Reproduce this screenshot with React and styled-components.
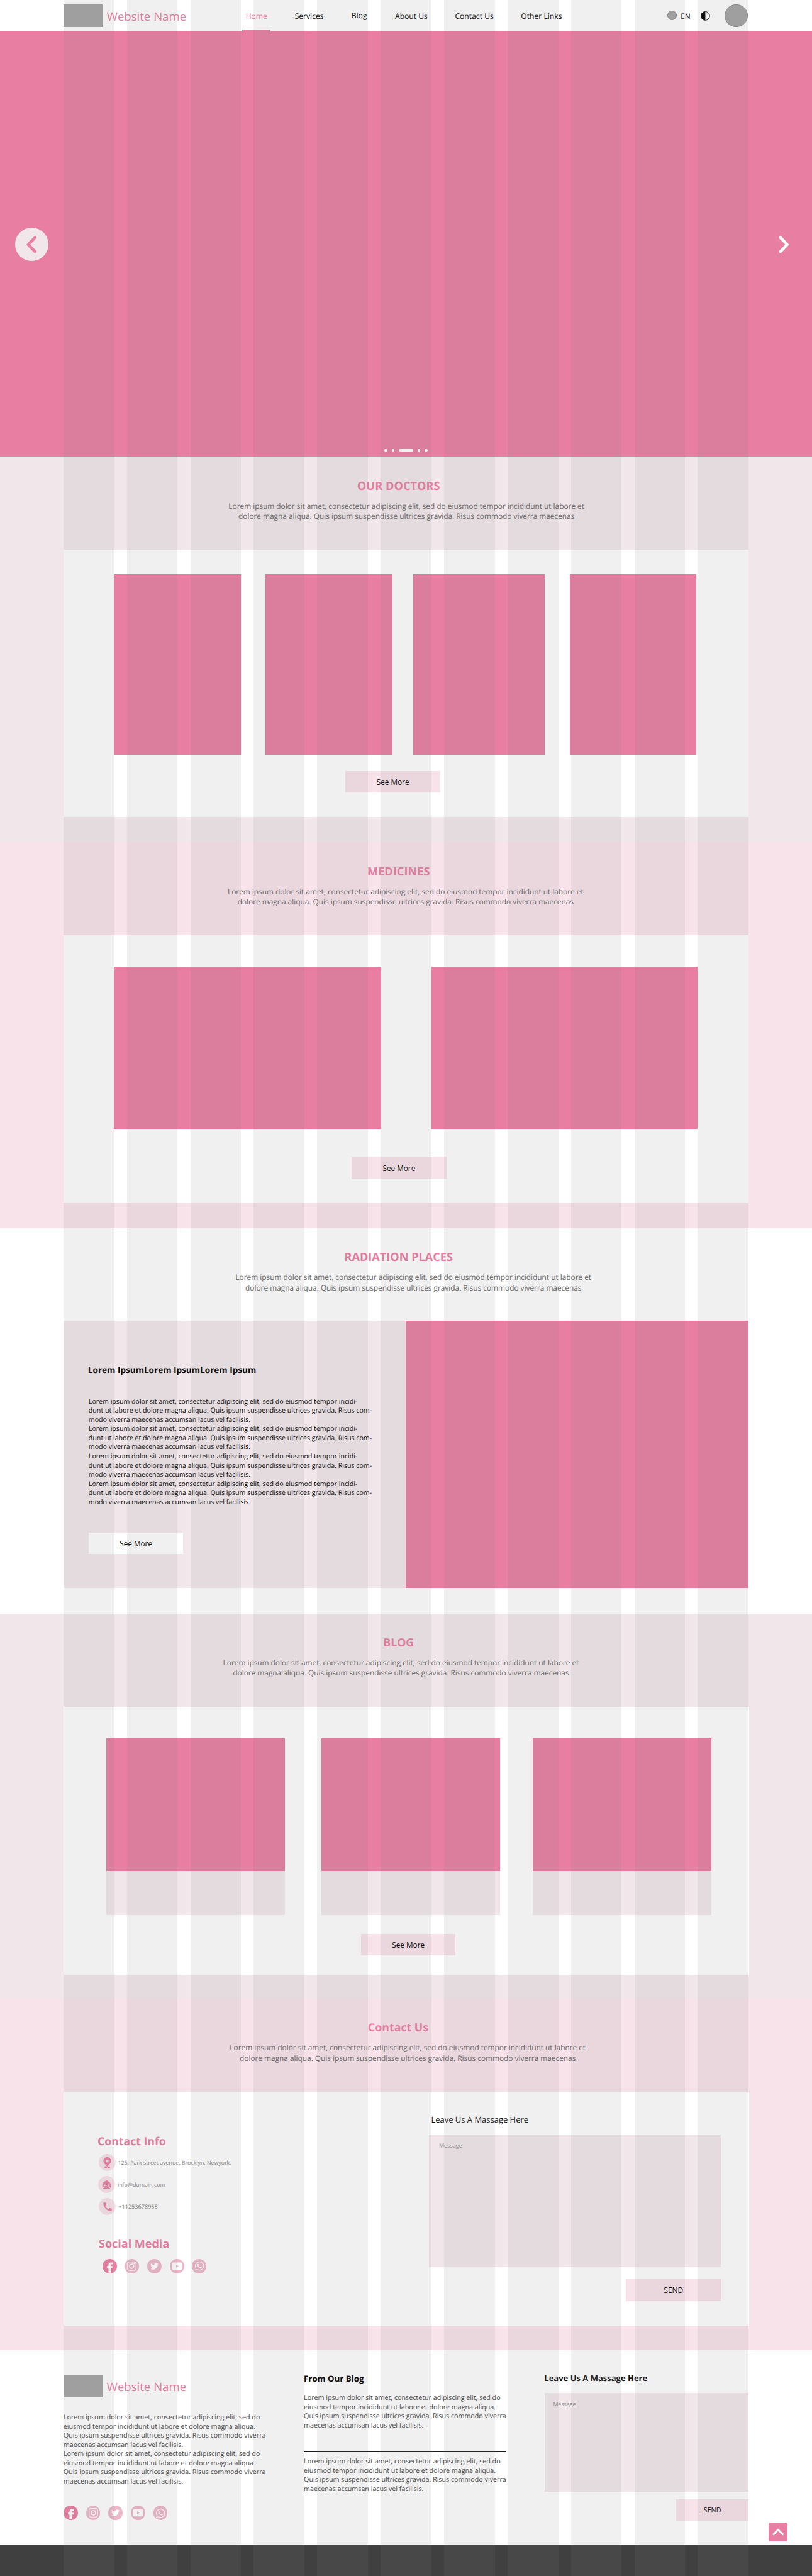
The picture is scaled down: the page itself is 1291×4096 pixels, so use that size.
import React from 'react';
import styled, { createGlobalStyle, css } from 'styled-components';
import { FaTwitter, FaWhatsapp } from 'react-icons/fa';
import { MdCall } from 'react-icons/md';

/* The design is specified on a 1920 x 6090 board; x() and y() bring its units to the page. */
const x = (n) => `${+((n * 1291) / 1920).toFixed(3)}px`;
const y = (n) => `${+((n * 4096) / 6090).toFixed(3)}px`;

const pink = '#e87ea1';
const pinkSoft = '#edb7ca';
const pinkPale = '#f9e3eb';
const mauve = '#f1e7ea';
const grey = '#a3a3a3';

const GlobalStyle = createGlobalStyle`
  *, *::before, *::after { box-sizing: border-box; }
  html, body { margin: 0; padding: 0; background: #fff; }
  body {
    font-family: "Open Sans", "Noto Sans", sans-serif;
    color: #000;
    text-rendering: geometricPrecision;
  }
  h1, h2, h3, p, ul { margin: 0; padding: 0; font-weight: 400; list-style: none; }
  button, textarea { font: inherit; border: 0; border-radius: 0; padding: 0; }
  svg { display: block; }
`;

const Page = styled.div`
  position: relative;
  display: flex;
  flex-direction: column;
  width: 1291px;
  height: 4096px;
  overflow: hidden;
`;

/* Translucent 11-column guide laid over the whole page */
const ColumnGuide = styled.div`
  position: absolute;
  inset: 0;
  z-index: 5;
  display: grid;
  grid-template-columns: repeat(11, ${x(120)});
  column-gap: ${x(30)};
  padding-left: ${x(150)};
  pointer-events: none;
`;

const GuideColumn = styled.i`
  background: rgba(128, 128, 128, 0.12);
`;

/* ---------- header ---------- */

const Header = styled.header`
  display: flex;
  align-items: flex-start;
  flex: none;
  height: ${y(75)};
  padding-left: ${x(150)};
  background: #fff;
`;

const BrandRow = styled.div`
  display: flex;
  align-items: flex-start;
  gap: ${x(9.5)};
  width: ${x(422)};
  height: ${y(54)};
  margin-top: ${(p) => y(p.$top)};
`;

const LogoBox = styled.div`
  width: ${x(93)};
  height: ${y(54)};
  background: ${grey};
`;

const BrandName = styled.span`
  margin-top: ${y(11.6)};
  font-size: ${x(27.65)};
  line-height: ${y(36)};
  color: ${pink};
  white-space: nowrap;
`;

const Nav = styled.nav`
  display: flex;
`;

const NavItem = styled.a`
  width: ${(p) => x(p.$step)};
  padding-top: ${(p) => y(26.3 + (p.$drop || 0))};
  font-size: ${x(18.05)};
  line-height: ${y(24)};
  white-space: nowrap;
  ${(p) =>
    p.$active &&
    css`
      height: ${y(75)};
      margin-right: ${x(57)};
      padding-left: ${x(9)};
      color: ${pink};
      border-bottom: ${y(5)} solid ${pink};
    `}
`;

const Disc = styled.span`
  flex: none;
  width: ${(p) => x(p.$size)};
  height: ${(p) => x(p.$size)};
  margin: ${(p) => y(p.$top)} 0 0 ${(p) => x(p.$left || 0)};
  border: 1px solid #858585;
  border-radius: 50%;
  background: ${grey};
`;

const Language = styled.span`
  width: ${x(48)};
  margin: ${y(26.6)} 0 0 ${x(9.5)};
  font-size: ${x(17.6)};
  line-height: ${y(24)};
`;

const ContrastIcon = styled.svg`
  width: ${x(22)};
  height: ${x(22)};
  margin-top: ${y(27)};
`;

/* ---------- hero ---------- */

const Hero = styled.section`
  display: flex;
  flex: none;
  flex-direction: column;
  justify-content: space-between;
  height: ${y(1005)};
  padding: ${y(462.5)} ${x(35)} ${y(12)};
  background: ${pink};
`;

const Arrows = styled.div`
  display: flex;
  justify-content: space-between;
`;

const ArrowButton = styled.button`
  width: ${x(80)};
  height: ${x(80)};
  border-radius: 50%;
  color: ${(p) => (p.$filled ? pink : '#fff')};
  background: ${(p) => (p.$filled ? mauve : 'transparent')};
  svg { width: 100%; height: 100%; }
`;

const Dots = styled.div`
  display: flex;
  justify-content: center;
  gap: ${x(10.2)};
`;

const Dot = styled.span`
  width: ${(p) => x(p.$active ? 34 : 7)};
  height: ${x(7)};
  border-radius: ${x(4)};
  background: #fff;
`;

/* ---------- sections ---------- */

const Section = styled.section`
  flex: none;
  height: ${(p) => y(p.$height)};
  background: ${(p) => p.$tone};
`;

const Intro = styled.div`
  height: ${(p) => y(p.$height)};
  padding-top: ${y(51)};
  text-align: center;
`;

const shift = css`
  padding-left: ${(p) => x(Math.max(0, 2 * p.$shift))};
  padding-right: ${(p) => x(Math.max(0, -2 * p.$shift))};
`;

const Title = styled.h2`
  ${shift}
  font-size: ${(p) => x(p.$size)};
  font-weight: 700;
  line-height: ${y(36)};
  color: ${pink};
`;

const Lead = styled.p`
  ${shift}
  margin-top: ${y(17.5)};
  font-size: ${x(17.63)};
  line-height: ${y(24.3)};
  color: #666;
`;

const Panel = styled.div`
  display: flex;
  flex-direction: ${(p) => (p.$row ? 'row' : 'column')};
  width: ${x(1620)};
  height: ${(p) => y(p.$height)};
  margin-left: ${(p) => x(p.$left || 150)};
  padding-top: ${(p) => y(p.$top || 0)};
  background: #fff;
`;

const CardRow = styled.div`
  display: flex;
`;

const Card = styled.article`
  width: ${(p) => x(p.$w)};
  height: ${(p) => y(p.$h)};
  margin-left: ${(p) => x(p.$gap)};
  background: ${pink};
  border-bottom: ${(p) => y(p.$caption || 0)} solid ${mauve};
`;

const Button = styled.button`
  flex: none;
  display: flex;
  align-items: center;
  justify-content: center;
  width: ${(p) => x(p.$w || 224)};
  height: ${y(51)};
  margin: ${(p) => y(p.$top)} 0 0 ${(p) => x(p.$left || 0)};
  font-size: ${(p) => x(p.$size || 17.5)};
  color: #000;
  background: ${(p) => (p.$plain ? '#fff' : pinkPale)};
`;

/* ---------- radiation places ---------- */

const Story = styled.div`
  width: ${x(809)};
  padding: ${y(101.5)} 0 0 ${x(59.5)};
  background: ${mauve};
`;

const StoryTitle = styled.h3`
  margin-left: ${x(-1.5)};
  font-size: ${x(20.19)};
  font-weight: 700;
  line-height: ${y(30)};
`;

const StoryText = styled.p`
  margin-top: ${y(50)};
  font-size: ${x(15.82)};
  line-height: ${y(21.6)};
  white-space: pre-line;
`;

const StoryImage = styled.div`
  width: ${x(811)};
  margin-top: ${y(1)};
  background: ${pink};
`;

/* ---------- contact ---------- */

const ContactDetails = styled.div`
  width: ${x(863)};
  padding: ${y(99.4)} 0 0 ${x(81)};
`;

const DetailTitle = styled.h3`
  margin: ${(p) => y(p.$top || 0)} 0 0 ${(p) => x(p.$left || 0)};
  font-size: ${(p) => x(p.$size)};
  font-weight: 700;
  line-height: ${y(36)};
  color: ${pink};
`;

const DetailList = styled.ul`
  display: flex;
  flex-direction: column;
  gap: ${y(12)};
  margin-top: ${y(12.6)};
`;

const Detail = styled.li`
  display: flex;
  align-items: center;
  gap: ${x(6)};
  height: ${y(40)};
  margin-left: ${(p) => x(p.$left)};
  font-size: ${(p) => x(p.$size)};
  color: #858585;
`;

const DetailIcon = styled.span`
  display: flex;
  align-items: center;
  justify-content: center;
  width: ${x(40)};
  height: ${x(40)};
  border-radius: 50%;
  color: ${pink};
  background: ${pinkPale};
`;

const Glyph = styled.svg`
  width: ${x(40)};
  height: ${x(40)};
  fill: currentColor;
`;

const Socials = styled.div`
  display: flex;
  gap: ${x(19.1)};
  margin: ${(p) => y(p.$top)} 0 0 ${(p) => x(p.$left || 0)};
`;

const Social = styled.a`
  display: flex;
  align-items: center;
  justify-content: center;
  width: ${x(34)};
  height: ${x(34)};
  border-radius: 50%;
  color: #fff;
  background: ${(p) => (p.$active ? pink : pinkSoft)};
  --disc: ${(p) => (p.$active ? pink : pinkSoft)};
`;

const SocialGlyph = styled.svg`
  width: ${x(34)};
  height: ${x(34)};
  fill: currentColor;
`;

const MessageForm = styled.form`
  display: flex;
  flex-direction: column;
  align-items: flex-end;
  width: ${(p) => x(p.$w)};
  padding-top: ${(p) => y(p.$top)};
`;

const FormTitle = styled.h3`
  align-self: flex-start;
  margin-left: ${(p) => x(p.$left)};
  font-size: ${(p) => x(p.$size)};
  font-weight: ${(p) => (p.$bold ? 700 : 400)};
  line-height: ${y(28)};
  color: #111;
`;

const MessageBox = styled.textarea`
  display: block;
  width: 100%;
  height: ${(p) => y(p.$h)};
  margin-top: ${y(20.9)};
  padding: ${y(18.6)} ${(p) => x(p.$pad)};
  font-size: ${(p) => x(p.$size)};
  line-height: ${y(18)};
  background: ${mauve};
  resize: none;
  &::placeholder { color: #8f8f8f; opacity: 1; }
`;

/* ---------- footer ---------- */

const Footer = styled.footer`
  position: relative;
  flex: none;
  display: flex;
  height: ${y(460)};
  padding-left: ${x(150)};
  background: #fff;
`;

const AboutColumn = styled.div`
  width: ${x(568.5)};
`;

const BlogColumn = styled.div`
  width: ${x(569.5)};
  padding-top: ${y(53.8)};
`;

const BlogTitle = styled.h3`
  font-size: ${x(19.74)};
  font-weight: 700;
  line-height: ${y(28)};
`;

const FooterText = styled.p`
  margin-top: ${(p) => y(p.$top)};
  font-size: ${x(15.96)};
  line-height: ${y(21.6)};
  color: #444;
  white-space: pre-line;
`;

const Divider = styled.hr`
  width: ${x(478)};
  height: 1px;
  margin: ${y(50.7)} 0 0;
  border: 0;
  background: #1a1a1a;
`;

const BackToTop = styled.button`
  position: absolute;
  right: ${x(58)};
  bottom: ${y(7)};
  width: ${x(45)};
  height: ${x(45)};
  border-radius: ${x(5)};
  background: ${pink};
  svg { width: 100%; height: 100%; }
`;

const BottomBar = styled.div`
  flex: 1;
  background: #404040;
`;

/* ---------- content ---------- */

const lead = [
  'Lorem ipsum dolor sit amet, consectetur adipiscing elit, sed do eiusmod tempor incididunt ut labore et',
  'dolore magna aliqua. Quis ipsum suspendisse ultrices gravida. Risus commodo viverra maecenas',
];

const storyParagraph =
  'Lorem ipsum dolor sit amet, consectetur adipiscing elit, sed do eiusmod tempor incidi-\n' +
  'dunt ut labore et dolore magna aliqua. Quis ipsum suspendisse ultrices gravida. Risus com-\n' +
  'modo viverra maecenas accumsan lacus vel facilisis.';

const footerParagraph =
  'Lorem ipsum dolor sit amet, consectetur adipiscing elit, sed do\n' +
  'eiusmod tempor incididunt ut labore et dolore magna aliqua.\n' +
  'Quis ipsum suspendisse ultrices gravida. Risus commodo viverra\n' +
  'maecenas accumsan lacus vel facilisis.';

function Brand({ top }) {
  return (
    <BrandRow $top={top}>
      <LogoBox />
      <BrandName>Website Name</BrandName>
    </BrandRow>
  );
}

function SectionIntro({ title, size, height, titleShift = -17.5, leadShift }) {
  return (
    <Intro $height={height}>
      <Title $size={size} $shift={titleShift}>{title}</Title>
      <Lead $shift={leadShift}>
        {lead[0]}
        <br />
        {lead[1]}
      </Lead>
    </Intro>
  );
}

function Chevron({ points, box = 80, width = 7, color = 'currentColor' }) {
  return (
    <svg viewBox={`0 0 ${box} ${box}`} fill="none" stroke={color} strokeWidth={width} strokeLinecap="round" strokeLinejoin="round">
      <polyline points={points} />
    </svg>
  );
}

function SocialLinks({ top, left }) {
  return (
    <Socials $top={top} $left={left}>
      <Social $active>
        <SocialGlyph viewBox="0 0 34 34">
          <path d="M14 32.3V21.3H10.5V16.7H14V14.5C14 10 16.5 8 20 8H24V12.5H21.5C19.9 12.5 19.3 13.3 19.3 14.8V16.7H23.8L23.2 21.3H19.3V32.3Z" />
        </SocialGlyph>
      </Social>
      <Social>
        <SocialGlyph viewBox="0 0 34 34">
          <g fill="none" stroke="currentColor">
            <rect x="6.9" y="6.9" width="20.2" height="20.2" rx="5" strokeWidth="1.7" />
            <circle cx="17" cy="17" r="5.1" strokeWidth="2.2" />
          </g>
          <circle cx="22.9" cy="11" r="1.3" />
        </SocialGlyph>
      </Social>
      <Social>
        <FaTwitter size={x(19.4)} />
      </Social>
      <Social>
        <SocialGlyph viewBox="0 0 34 34">
          <rect x="5" y="8.3" width="24.3" height="17.4" rx="4" />
          <path d="M14.8 13.4L21 17L14.8 20.6Z" fill="var(--disc)" />
        </SocialGlyph>
      </Social>
      <Social>
        <FaWhatsapp size={x(24.4)} />
      </Social>
    </Socials>
  );
}

export default function App() {
  return (
    <>
      <GlobalStyle />
      <Page>
        <ColumnGuide>
          {Array.from({ length: 11 }, (_, i) => <GuideColumn key={i} />)}
        </ColumnGuide>

        <Header>
          <Brand top={10} />
          <Nav>
            <NavItem $step={68} $active>Home</NavItem>
            <NavItem $step={134}>Services</NavItem>
            <NavItem $step={103} $drop={-1}>Blog</NavItem>
            <NavItem $step={142} $drop={1}>About Us</NavItem>
            <NavItem $step={156}>Contact Us</NavItem>
            <NavItem $step={346} $drop={1}>Other Links</NavItem>
          </Nav>
          <Disc $size={22} $top={26} />
          <Language>EN</Language>
          <ContrastIcon viewBox="0 0 22 22">
            <circle cx="11" cy="11" r="10.3" fill="#fff" stroke="#000" strokeWidth="1.3" />
            <path d="M11 0.7A10.3 10.3 0 0 0 11 21.3Z" />
          </ContrastIcon>
          <Disc $size={54} $top={10} $left={34.5} />
        </Header>

        <Hero>
          <Arrows>
            <ArrowButton $filled><Chevron points="47,23.5 31,40 47,56.5" /></ArrowButton>
            <ArrowButton><Chevron points="40,23.5 56,40 40,56.5" /></ArrowButton>
          </Arrows>
          <Dots>
            <Dot /><Dot /><Dot $active /><Dot /><Dot />
          </Dots>
        </Hero>

        <Section $height={911.5} $tone={mauve}>
          <SectionIntro title="OUR DOCTORS" size={27.11} height={219} leadShift={1} />
          <Panel $height={633} $top={58}>
            <CardRow>
              <Card $w={300} $h={427} $gap={119} />
              <Card $w={300} $h={427} $gap={59} />
              <Card $w={311} $h={427} $gap={49} />
              <Card $w={300} $h={427} $gap={59} />
            </CardRow>
            <Button $top={38.5} $left={667}>See More</Button>
          </Panel>
        </Section>

        <Section $height={912.5} $tone={pinkPale}>
          <SectionIntro title="MEDICINES" size={27.07} height={219.5} leadShift={-1} />
          <Panel $height={633} $top={75}>
            <CardRow>
              <Card $w={633} $h={383} $gap={119} />
              <Card $w={629} $h={383} $gap={118} />
            </CardRow>
            <Button $top={66} $left={681.5}>See More</Button>
          </Panel>
        </Section>

        <Section $height={911} $tone="#fff">
          <SectionIntro title="RADIATION PLACES" size={26.99} height={218} leadShift={17.5} />
          <Panel $height={633} $row>
            <Story>
              <StoryTitle>Lorem IpsumLorem IpsumLorem Ipsum</StoryTitle>
              <StoryText>{Array(4).fill(storyParagraph).join('\n')}</StoryText>
              <Button $top={60} $plain>See More</Button>
            </Story>
            <StoryImage />
          </Panel>
        </Section>

        <Section $height={910} $tone={mauve}>
          <SectionIntro title="BLOG" size={26.48} height={221} leadShift={-12} />
          <Panel $height={633} $top={73} $left={151}>
            <CardRow>
              <Card $w={421.5} $h={419} $caption={105.5} $gap={101} />
              <Card $w={421.5} $h={419} $caption={105.5} $gap={87} />
              <Card $w={422} $h={419} $caption={105.5} $gap={77.5} />
            </CardRow>
            <Button $top={44} $left={702.5}>See More</Button>
          </Panel>
        </Section>

        <Section $height={831} $tone={pinkPale}>
          <SectionIntro title="Contact Us" size={26.42} height={220} leadShift={4} titleShift={-18.5} />
          <Panel $height={553} $left={151} $row>
            <ContactDetails>
              <DetailTitle $size={26.3} $left={-1.5}>Contact Info</DetailTitle>
              <DetailList>
                <Detail $left={1} $size={13.12}>
                  <DetailIcon>
                    <Glyph viewBox="0 0 40 40">
                      <path fillRule="evenodd" d="M20 7A9 9 0 0 0 11 16C11 21.5 16.5 25.5 20 30.5C23.5 25.5 29 21.5 29 16A9 9 0 0 0 20 7ZM20 13.3A3.3 3.3 0 1 1 20 19.9A3.3 3.3 0 0 1 20 13.3Z" />
                      <path d="M16.6 28.8C14.3 29.2 13 30.2 13 31.3C13 32.9 16 34 20 34S27 32.9 27 31.3C27 30.2 25.7 29.2 23.4 28.8L20 32.4Z" />
                    </Glyph>
                  </DetailIcon>
                  125, Park street avenue, Brocklyn, Newyork.
                </Detail>
                <Detail $left={0} $size={13.25}>
                  <DetailIcon>
                    <Glyph viewBox="0 0 40 40">
                      <path d="M10.6 16.2L20 9.8L29.4 16.2L23.4 20.8H16.6Z" />
                      <path d="M10 17.6L15.7 21.9L10 28.2ZM30 17.6L24.3 21.9L30 28.2ZM10.9 30L17 22.6H23L29.1 30Z" />
                    </Glyph>
                  </DetailIcon>
                  info@domain.com
                </Detail>
                <Detail $left={2} $size={13.55}>
                  <DetailIcon><MdCall size={x(26.7)} /></DetailIcon>
                  +11253678958
                </Detail>
              </DetailList>
              <DetailTitle $size={26.79} $top={50} $left={1.5}>Social Media</DetailTitle>
              <SocialLinks top={17.8} left={10} />
            </ContactDetails>
            <MessageForm $w={691} $top={52.1}>
              <FormTitle $size={19.3} $left={5.5}>Leave Us A Massage Here</FormTitle>
              <MessageBox $h={314} $pad={24} $size={13.5} placeholder="Message" />
              <Button type="button" $w={225} $top={29} $size={17.8}>SEND</Button>
            </MessageForm>
          </Panel>
        </Section>

        <Footer>
          <AboutColumn>
            <Brand top={58} />
            <FooterText $top={37.4}>{[footerParagraph, footerParagraph].join('\n')}</FooterText>
            <SocialLinks top={45.9} />
          </AboutColumn>
          <BlogColumn>
            <BlogTitle>From Our Blog</BlogTitle>
            <FooterText $top={21.1}>{footerParagraph}</FooterText>
            <Divider />
            <FooterText $top={12.2}>{footerParagraph}</FooterText>
          </BlogColumn>
          <MessageForm $w={482} $top={52.2}>
            <FormTitle $size={19.36} $left={-1} $bold>Leave Us A Massage Here</FormTitle>
            <MessageBox $h={234} $pad={20} $size={13.1} placeholder="Message" />
            <Button type="button" $w={171} $top={17} $size={15.9}>SEND</Button>
          </MessageForm>
          <BackToTop>
            <Chevron points="12,27.7 22.5,17.2 33.5,27.7" box={45} width={4.4} color="#fff" />
          </BackToTop>
        </Footer>
        <BottomBar />
      </Page>
    </>
  );
}
